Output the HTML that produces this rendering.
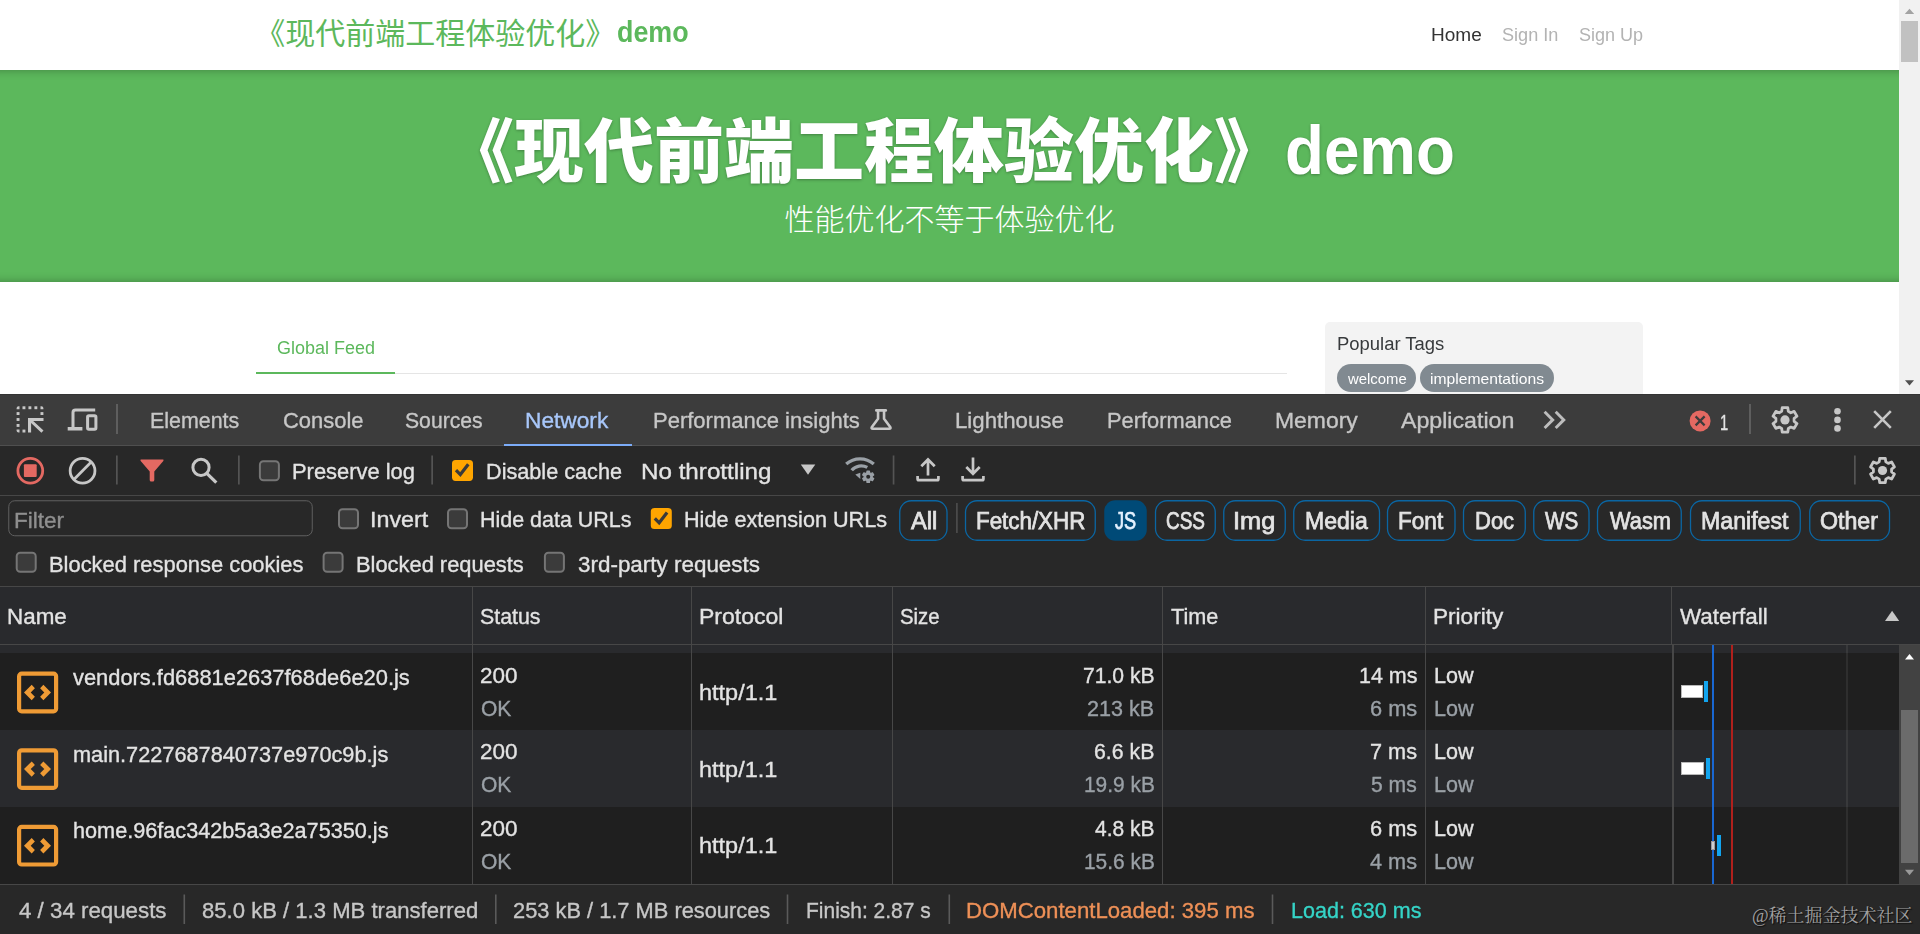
<!DOCTYPE html>
<html lang="zh-CN">
<head>
<meta charset="utf-8">
<title>《现代前端工程体验优化》demo</title>
<style>
*{box-sizing:border-box;margin:0;padding:0}
html,body{width:1920px;height:934px;overflow:hidden;background:#fff}
body{position:relative;font-family:"Liberation Sans","Noto Sans CJK SC",sans-serif}
.a{position:absolute}
.t{position:absolute;white-space:nowrap;transform-origin:0 0;font-family:"Liberation Sans","Noto Sans CJK SC",sans-serif}
.cjk{position:absolute;white-space:nowrap;font-family:"Liberation Sans","Noto Sans CJK SC",sans-serif}
#txt{position:absolute;left:0;top:0;width:1920px;height:934px;will-change:transform}
/* page */
#page{left:0;top:0;width:1899px;height:394px;background:#fff;overflow:hidden}
#banner{left:0;top:70px;width:1899px;height:212px;background:#5cb85c;box-shadow:inset 0 10px 10px -10px rgba(0,0,0,.3),inset 0 -10px 10px -10px rgba(0,0,0,.3)}
#pscroll{left:1899px;top:0;width:21px;height:394px;background:#f1f1f1}
#pthumb{left:1901px;top:21px;width:17px;height:41px;background:#c1c1c1}
#side{left:1325px;top:322px;width:318px;height:90px;background:#f3f3f3;border-radius:5px}
.tag{top:364.2px;height:27.8px;border-radius:14px;background:#818a91}
/* devtools */
#dt{left:0;top:394px;width:1920px;height:540px;background:#282828;overflow:hidden}
.hl{position:absolute;left:0;width:1920px;height:1px}
.vl{position:absolute;width:1px}
</style>
</head>
<body>
<!-- ================= PAGE ================= -->
<div id="page" class="a">
  <div id="banner" class="a"></div>
  <!-- nav brand -->
  <span class="cjk" id="brand" style="left:255.3px;top:12px;font-size:30px;line-height:44px;color:#5cb85c">《现代前端工程体验优化》</span>
  <!-- banner title -->
  <span class="cjk" id="h1" style="left:444px;top:103px;font-size:70px;line-height:100px;font-weight:900;color:#fff;text-shadow:0 1px 3px rgba(0,0,0,.3)">《现代前端工程体验优化》</span>
  <span class="cjk" id="sub" style="left:784.5px;top:197.7px;font-size:30px;line-height:44px;font-weight:300;color:#fff">性能优化不等于体验优化</span>
  <!-- feed toggle -->
  <div class="a" style="left:256px;top:372.5px;width:1031px;height:1.3px;background:#e5e5e5"></div>
  <div class="a" style="left:256px;top:371.6px;width:139px;height:2.3px;background:#5cb85c"></div>
  <!-- sidebar -->
  <div id="side" class="a"></div>
  <div class="a tag" style="left:1336.7px;width:79.5px"></div>
  <div class="a tag" style="left:1420px;width:134px"></div>
</div>
<div id="pscroll" class="a"></div>
<div id="pthumb" class="a"></div>
<svg class="a" style="left:1899px;top:0" width="21" height="394" viewBox="0 0 21 394">
  <path d="M5.8 14 L10.5 8.8 L15.2 14 Z" fill="#a3a3a3"/>
  <path d="M6 380.3 L15 380.3 L10.5 385.5 Z" fill="#505050"/>
</svg>

<!-- ================= DEVTOOLS ================= -->
<div id="dt" class="a">
  <!-- tab bar -->
  <div class="a" style="left:0;top:0;width:1920px;height:52px;background:#3c3c3c"></div>
  <div class="hl" style="top:0;background:#343434"></div>
  <div class="hl" style="top:51px;background:#4f4f4f"></div>
  <div class="a" style="left:504px;top:49.5px;width:128px;height:2.5px;background:#7cacf8"></div>
  <!-- toolbar bottom border -->
  <div class="hl" style="top:101px;background:#474747"></div>
  <!-- grid header -->
  <div class="a" style="left:0;top:192px;width:1920px;height:67px;background:#292a2d"></div>
  <div class="hl" style="top:192px;background:#474747"></div>
  <div class="hl" style="top:250px;background:#474747"></div>
  <!-- rows -->
  <div class="a" style="left:0;top:259px;width:1899px;height:77px;background:#1f1f1f"></div>
  <div class="a" style="left:0;top:336px;width:1899px;height:77px;background:#292a2d"></div>
  <div class="a" style="left:0;top:413px;width:1899px;height:77px;background:#1f1f1f"></div>
  <!-- column dividers -->
  <div class="vl" style="left:472px;top:192px;height:298px;background:#474747"></div>
  <div class="vl" style="left:691px;top:192px;height:298px;background:#474747"></div>
  <div class="vl" style="left:892px;top:192px;height:298px;background:#474747"></div>
  <div class="vl" style="left:1162px;top:192px;height:298px;background:#474747"></div>
  <div class="vl" style="left:1425px;top:192px;height:298px;background:#474747"></div>
  <div class="vl" style="left:1671px;top:192px;height:59px;background:#474747"></div>
  <div class="a" style="left:1672px;top:251px;width:2px;height:239px;background:#474747"></div>
  <div class="a" style="left:1845.5px;top:251px;width:2px;height:239px;background:rgba(255,255,255,.07)"></div>
  <!-- waterfall lines -->
  <div class="a" style="left:1712.3px;top:251px;width:2px;height:239px;background:#1967d2"></div>
  <div class="a" style="left:1731px;top:251px;width:2px;height:239px;background:#b0201c"></div>
  <!-- waterfall bars -->
  <div class="a" style="left:1681.3px;top:291.3px;width:21.3px;height:13.2px;background:#fff;border:1px solid #b8b8b8"></div>
  <div class="a" style="left:1704.3px;top:287px;width:4px;height:21px;background:#12a4ee"></div>
  <div class="a" style="left:1681.3px;top:368px;width:23px;height:13.2px;background:#fff;border:1px solid #b8b8b8"></div>
  <div class="a" style="left:1705.8px;top:364.2px;width:4.2px;height:21px;background:#12a4ee"></div>
  <div class="a" style="left:1711.3px;top:447px;width:4.2px;height:9.2px;background:#d0d0d0;border:1px solid #9a9aa0"></div>
  <div class="a" style="left:1717px;top:441.2px;width:4.2px;height:20.6px;background:#12a4ee"></div>
  <!-- grid scrollbar -->
  <div class="a" style="left:1899px;top:251px;width:21px;height:239px;background:#424242"></div>
  <div class="a" style="left:1901.3px;top:316.3px;width:16.7px;height:152.5px;background:#6b6b6b"></div>
  <svg class="a" style="left:1899px;top:251px" width="21" height="239" viewBox="0 0 21 239">
    <path d="M6 14.5 L10.5 9 L15 14.5 Z" fill="#fff"/>
    <path d="M6 224.7 L15 224.7 L10.5 230.3 Z" fill="#9a9a9a"/>
  </svg>
  <!-- status bar -->
  <div class="a" style="left:0;top:490px;width:1920px;height:50px;background:#282828"></div>
  <div class="hl" style="top:490px;background:#474747"></div>
<!--DT-->
</div>
<span class="a" id="wm" style="left:1752px;top:903px;font-family:'Liberation Serif','Noto Serif CJK SC',serif;font-size:18px;line-height:26px;color:#a0a0a0;white-space:nowrap;text-shadow:1px 1px 1px rgba(0,0,0,.8)">@稀土掘金技术社区</span>
<svg class="a" style="left:0;top:0;pointer-events:none" width="1920" height="934" viewBox="0 0 1920 934"><rect x="22.5" y="406.3" width="2.9" height="2.9" fill="#c7c7c7"/>
<rect x="28.45" y="406.3" width="2.9" height="2.9" fill="#c7c7c7"/>
<rect x="34.4" y="406.3" width="2.9" height="2.9" fill="#c7c7c7"/>
<rect x="16.6" y="412.1" width="2.9" height="2.9" fill="#c7c7c7"/>
<rect x="16.6" y="418.05" width="2.9" height="2.9" fill="#c7c7c7"/>
<rect x="16.6" y="424" width="2.9" height="2.9" fill="#c7c7c7"/>
<rect x="22.5" y="429.6" width="2.9" height="2.9" fill="#c7c7c7"/>
<rect x="40.5" y="412.1" width="2.9" height="2.9" fill="#c7c7c7"/>
<path d="M16.6 409.2 V408.3 Q16.6 406.3 18.6 406.3 H19.5 V409.2Z" fill="#c7c7c7"/>
<path d="M43.4 409.2 V408.3 Q43.4 406.3 41.4 406.3 H40.5 V409.2Z" fill="#c7c7c7"/>
<path d="M16.6 429.6 V430.5 Q16.6 432.5 18.6 432.5 H19.5 V429.6Z" fill="#c7c7c7"/>
<path d="M28 418 H43.5 V420.9 H33.2 L43.5 430.6 L41.4 432.7 L31.1 423 V432.6 H28Z" fill="#c7c7c7"/>
<path d="M73 427.4 V412.5 Q73 410 75.5 410 H95.2" fill="none" stroke="#c7c7c7" stroke-width="3"/>
<rect x="67.7" y="427" width="14.7" height="3.5" fill="#c7c7c7"/>
<rect x="87.6" y="415.75" width="8.3" height="13.55" rx="1.3" fill="none" stroke="#c7c7c7" stroke-width="3"/>
<rect x="116" y="404" width="2" height="30" fill="#5e5e5e"/>
<rect x="1749" y="404" width="2" height="30" fill="#5e5e5e"/>
<path d="M876.3 410.4 H885.8" stroke="#c7c7c7" stroke-width="2.6" stroke-linecap="round" fill="none"/>
<path d="M878.05 410.4 V418.8 L871.9 427 Q870.9 428.7 872.9 428.7 H889.2 Q891.2 428.7 890.2 427 L884.05 418.8 V410.4" stroke="#c7c7c7" stroke-width="2.6" stroke-linejoin="round" fill="none"/>
<path d="M1544.6 411.8 L1552.7 419.9 L1544.6 428" stroke="#bdbdbd" stroke-width="2.9" fill="none"/>
<path d="M1555.6999999999998 411.8 L1563.8 419.9 L1555.6999999999998 428" stroke="#bdbdbd" stroke-width="2.9" fill="none"/>
<circle cx="1700.1" cy="420.9" r="10.5" fill="#e46962"/>
<path d="M1695.6 416.4 L1704.6 425.4 M1704.6 416.4 L1695.6 425.4" stroke="#3c3c3c" stroke-width="2.2" fill="none"/>
<path d="M1788.30 411.31 L1787.81 407.72 L1782.19 407.72 L1781.70 411.31 L1779.21 412.75 L1775.86 411.38 L1773.05 416.25 L1775.91 418.46 L1775.91 421.34 L1773.05 423.55 L1775.86 428.42 L1779.21 427.05 L1781.70 428.49 L1782.19 432.08 L1787.81 432.08 L1788.30 428.49 L1790.79 427.05 L1794.14 428.42 L1796.95 423.55 L1794.09 421.34 L1794.09 418.46 L1796.95 416.25 L1794.14 411.38 L1790.79 412.75Z" fill="none" stroke="#c7c7c7" stroke-width="2.8" stroke-linejoin="round"/><circle cx="1785" cy="419.9" r="4.6" fill="#c7c7c7"/>
<path d="M1885.80 461.91 L1885.31 458.32 L1879.69 458.32 L1879.20 461.91 L1876.71 463.35 L1873.36 461.98 L1870.55 466.85 L1873.41 469.06 L1873.41 471.94 L1870.55 474.15 L1873.36 479.02 L1876.71 477.65 L1879.20 479.09 L1879.69 482.68 L1885.31 482.68 L1885.80 479.09 L1888.29 477.65 L1891.64 479.02 L1894.45 474.15 L1891.59 471.94 L1891.59 469.06 L1894.45 466.85 L1891.64 461.98 L1888.29 463.35Z" fill="none" stroke="#c7c7c7" stroke-width="2.8" stroke-linejoin="round"/><circle cx="1882.5" cy="470.5" r="4.6" fill="#c7c7c7"/>
<circle cx="1837.5" cy="411.3" r="3.3" fill="#c7c7c7"/>
<circle cx="1837.5" cy="419.9" r="3.3" fill="#c7c7c7"/>
<circle cx="1837.5" cy="428.4" r="3.3" fill="#c7c7c7"/>
<path d="M1874.2 411.2 L1890.8 427.9 M1890.8 411.2 L1874.2 427.9" stroke="#c7c7c7" stroke-width="2.6" fill="none"/>
<circle cx="30.3" cy="470.7" r="12.4" fill="none" stroke="#e46962" stroke-width="2.8"/>
<rect x="23.9" y="464.3" width="12.8" height="12.8" rx="1" fill="#e46962"/>
<circle cx="82.55" cy="470.7" r="12.4" fill="none" stroke="#c7c7c7" stroke-width="2.8"/>
<path d="M73.9 479.4 L91.2 462" stroke="#c7c7c7" stroke-width="2.8" fill="none"/>
<rect x="116" y="455.5" width="1.7" height="29" fill="#545454"/>
<rect x="238" y="455.5" width="1.7" height="29" fill="#545454"/>
<rect x="431.3" y="455.5" width="1.7" height="29" fill="#545454"/>
<rect x="892.7" y="455.5" width="1.7" height="29" fill="#545454"/>
<rect x="1854" y="455.5" width="1.7" height="29" fill="#545454"/>
<path d="M141.3 459.6 H162.7 Q164.3 459.6 163.3 460.9 L154.3 471.6 V480 Q154.3 481.5 152.8 481.5 H151.2 Q149.7 481.5 149.7 480 V471.6 L140.7 460.9 Q139.7 459.6 141.3 459.6Z" fill="#e46962"/>
<circle cx="201" cy="467.4" r="8.1" fill="none" stroke="#c7c7c7" stroke-width="3"/>
<path d="M206.8 473.3 L216.3 482.6" stroke="#c7c7c7" stroke-width="3.2" fill="none"/>
<rect x="259.9" y="461.2" width="19" height="19" rx="3.5" fill="#3b3b3b" stroke="#757575" stroke-width="2"/>
<rect x="339" y="509.3" width="19" height="19" rx="3.5" fill="#3b3b3b" stroke="#757575" stroke-width="2"/>
<rect x="448" y="509.3" width="19" height="19" rx="3.5" fill="#3b3b3b" stroke="#757575" stroke-width="2"/>
<rect x="16.7" y="552.8" width="19" height="19" rx="3.5" fill="#3b3b3b" stroke="#757575" stroke-width="2"/>
<rect x="323.6" y="552.8" width="19" height="19" rx="3.5" fill="#3b3b3b" stroke="#757575" stroke-width="2"/>
<rect x="544.9" y="552.8" width="19" height="19" rx="3.5" fill="#3b3b3b" stroke="#757575" stroke-width="2"/>
<rect x="452" y="459.9" width="21" height="21" rx="3.6" fill="#ffa500"/><path d="M456.0 470.09999999999997 L460.35 474.59999999999997 L468.3 464.29999999999995" fill="none" stroke="#3a3a3a" stroke-width="3.2"/>
<rect x="650.8" y="508.1" width="21" height="21" rx="3.6" fill="#ffa500"/><path d="M654.8 518.3000000000001 L659.15 522.8000000000001 L667.0999999999999 512.5" fill="none" stroke="#3a3a3a" stroke-width="3.2"/>
<path d="M800.8 464.4 H815.3 L808 474.8Z" fill="#c7c7c7"/>
<path d="M846.2 464.1 A21 21 0 0 1 873.8 464.1" stroke="#9aa0a6" stroke-width="3.3" fill="none"/>
<path d="M851.7 470.2 A12.5 12.5 0 0 1 867.3 467.4" stroke="#9aa0a6" stroke-width="3.3" fill="none"/>
<path d="M855.3 474.5 L860.3 472.7 L860.3 479Z" fill="#9aa0a6"/>
<circle cx="868.2" cy="476.7" r="7.4" fill="#282828"/>
<path d="M869.60 472.85 L869.41 471.03 L866.99 471.03 L866.80 472.85 L865.56 473.56 L863.89 472.82 L862.68 474.91 L864.16 475.99 L864.16 477.41 L862.68 478.49 L863.89 480.58 L865.56 479.84 L866.80 480.55 L866.99 482.37 L869.41 482.37 L869.60 480.55 L870.84 479.84 L872.51 480.58 L873.72 478.49 L872.24 477.41 L872.24 475.99 L873.72 474.91 L872.51 472.82 L870.84 473.56Z" fill="#9aa0a6" stroke="#9aa0a6" stroke-width="1.2" stroke-linejoin="round"/><circle cx="868.2" cy="476.7" r="0" fill="#9aa0a6"/>
<circle cx="868.2" cy="476.7" r="2" fill="#282828"/>
<path d="M917.6 475.9 V478.9 Q917.6 480.1 918.8 480.1 H937.2 Q938.4 480.1 938.4 478.9 V475.9" stroke="#c7c7c7" stroke-width="2.7" fill="none"/>
<path d="M928 475.5 V459.6 M921.3 466.3 L928 459.5 L934.7 466.3" stroke="#c7c7c7" stroke-width="2.7" fill="none"/>
<path d="M962.6 475.9 V478.9 Q962.6 480.1 963.8 480.1 H982.2 Q983.4 480.1 983.4 478.9 V475.9" stroke="#c7c7c7" stroke-width="2.7" fill="none"/>
<path d="M973 457.4 V473.6 M966.3 467 L973 473.8 L979.7 467" stroke="#c7c7c7" stroke-width="2.7" fill="none"/>
<rect x="8.75" y="500.75" width="303.5" height="35" rx="6" fill="none" stroke="#5f5f5f" stroke-width="1"/>
<rect x="899.75" y="500.75" width="47.25" height="39.5" rx="11.5" fill="none" stroke="#0a66a3" stroke-width="1.3"/>
<rect x="965.5" y="500.75" width="129.75" height="39.5" rx="11.5" fill="none" stroke="#0a66a3" stroke-width="1.3"/>
<rect x="1104.25" y="500.25" width="42.5" height="40.5" rx="11" fill="#004a77"/>
<rect x="1155.5" y="500.75" width="59.75" height="39.5" rx="11.5" fill="none" stroke="#0a66a3" stroke-width="1.3"/>
<rect x="1223.75" y="500.75" width="61.5" height="39.5" rx="11.5" fill="none" stroke="#0a66a3" stroke-width="1.3"/>
<rect x="1293.75" y="500.75" width="85.75" height="39.5" rx="11.5" fill="none" stroke="#0a66a3" stroke-width="1.3"/>
<rect x="1387.5" y="500.75" width="67.5" height="39.5" rx="11.5" fill="none" stroke="#0a66a3" stroke-width="1.3"/>
<rect x="1463.5" y="500.75" width="61.75" height="39.5" rx="11.5" fill="none" stroke="#0a66a3" stroke-width="1.3"/>
<rect x="1533.75" y="500.75" width="55.25" height="39.5" rx="11.5" fill="none" stroke="#0a66a3" stroke-width="1.3"/>
<rect x="1597.5" y="500.75" width="83.75" height="39.5" rx="11.5" fill="none" stroke="#0a66a3" stroke-width="1.3"/>
<rect x="1690.5" y="500.75" width="109.75" height="39.5" rx="11.5" fill="none" stroke="#0a66a3" stroke-width="1.3"/>
<rect x="1809.75" y="500.75" width="79.75" height="39.5" rx="11.5" fill="none" stroke="#0a66a3" stroke-width="1.3"/>
<rect x="956" y="503" width="1.8" height="30" fill="#4a4a4a"/>
<path d="M1885 621 L1892.1 610.8 L1899.2 621Z" fill="#c7c7c7"/>
<rect x="19.1" y="673.7" width="37" height="37.6" rx="2.6" fill="none" stroke="#ef9b35" stroke-width="4.2"/><path d="M24 692.5 L31.7 684.8 L34.9 688.3 L30.7 692.5 L34.9 696.7 L31.7 700.2Z" fill="#ef9b35"/><path d="M51 692.5 L43.4 684.8 L40.1 688.3 L44.3 692.5 L40.1 696.7 L43.4 700.2Z" fill="#ef9b35"/>
<rect x="19.1" y="750.3000000000001" width="37" height="37.6" rx="2.6" fill="none" stroke="#ef9b35" stroke-width="4.2"/><path d="M24 769.1 L31.7 761.4 L34.9 764.9 L30.7 769.1 L34.9 773.3000000000001 L31.7 776.8000000000001Z" fill="#ef9b35"/><path d="M51 769.1 L43.4 761.4 L40.1 764.9 L44.3 769.1 L40.1 773.3000000000001 L43.4 776.8000000000001Z" fill="#ef9b35"/>
<rect x="19.1" y="826.9" width="37" height="37.6" rx="2.6" fill="none" stroke="#ef9b35" stroke-width="4.2"/><path d="M24 845.6999999999999 L31.7 837.9999999999999 L34.9 841.4999999999999 L30.7 845.6999999999999 L34.9 849.9 L31.7 853.4Z" fill="#ef9b35"/><path d="M51 845.6999999999999 L43.4 837.9999999999999 L40.1 841.4999999999999 L44.3 845.6999999999999 L40.1 849.9 L43.4 853.4Z" fill="#ef9b35"/>
<rect x="183.5" y="894.5" width="1.6" height="29.5" fill="#5a5a5a"/>
<rect x="495" y="894.5" width="1.6" height="29.5" fill="#5a5a5a"/>
<rect x="786.7" y="894.5" width="1.6" height="29.5" fill="#5a5a5a"/>
<rect x="948.5" y="894.5" width="1.6" height="29.5" fill="#5a5a5a"/>
<rect x="1271.7" y="894.5" width="1.6" height="29.5" fill="#5a5a5a"/></svg>
<div id="txt">
<span class="t" style="left:1430.99px;top:22.99px;font-size:18.8px;line-height:23px;color:#333333;transform:scaleX(1.0133);">Home</span>
<span class="t" style="left:1502.40px;top:22.99px;font-size:18.8px;line-height:23px;color:#b3b3b3;transform:scaleX(0.9651);">Sign In</span>
<span class="t" style="left:1579.30px;top:22.99px;font-size:18.8px;line-height:23px;color:#b3b3b3;transform:scaleX(0.9598);">Sign Up</span>
<span class="t" style="left:616.57px;top:15.05px;font-size:29px;line-height:35px;color:#5cb85c;font-weight:700;transform:scaleX(0.9256);">demo</span>
<span class="t" style="left:1284.94px;top:109.26px;font-size:68.5px;line-height:83px;color:#ffffff;font-weight:700;transform:scaleX(0.9293);text-shadow:0 1px 3px rgba(0,0,0,.3);">demo</span>
<span class="t" style="left:276.75px;top:336.24px;font-size:18.8px;line-height:23px;color:#5cb85c;transform:scaleX(0.9571);">Global Feed</span>
<span class="t" style="left:1337.12px;top:332.19px;font-size:18.8px;line-height:23px;color:#373a3c;transform:scaleX(0.9821);">Popular Tags</span>
<span class="t" style="left:1348.01px;top:369.77px;font-size:14.8px;line-height:18px;color:#ffffff;transform:scaleX(1.0058);">welcome</span>
<span class="t" style="left:1430.20px;top:369.77px;font-size:14.8px;line-height:18px;color:#ffffff;transform:scaleX(1.0592);">implementations</span>
<span class="t" style="left:150.28px;top:406.88px;font-size:22px;line-height:27px;color:#c7c7c7;transform:scaleX(0.9729);-webkit-text-stroke:0.35px;">Elements</span>
<span class="t" style="left:282.75px;top:406.88px;font-size:22px;line-height:27px;color:#c7c7c7;transform:scaleX(0.9971);-webkit-text-stroke:0.35px;">Console</span>
<span class="t" style="left:404.79px;top:406.88px;font-size:22px;line-height:27px;color:#c7c7c7;transform:scaleX(0.9617);-webkit-text-stroke:0.35px;">Sources</span>
<span class="t" style="left:653.25px;top:406.88px;font-size:22px;line-height:27px;color:#c7c7c7;transform:scaleX(1.0005);-webkit-text-stroke:0.35px;">Performance insights</span>
<span class="t" style="left:955.24px;top:406.88px;font-size:22px;line-height:27px;color:#c7c7c7;transform:scaleX(1.0102);-webkit-text-stroke:0.35px;">Lighthouse</span>
<span class="t" style="left:1106.51px;top:406.88px;font-size:22px;line-height:27px;color:#c7c7c7;transform:scaleX(0.9923);-webkit-text-stroke:0.35px;">Performance</span>
<span class="t" style="left:1275.21px;top:406.88px;font-size:22px;line-height:27px;color:#c7c7c7;transform:scaleX(1.0421);-webkit-text-stroke:0.35px;">Memory</span>
<span class="t" style="left:1401.25px;top:406.88px;font-size:22px;line-height:27px;color:#c7c7c7;transform:scaleX(1.0527);-webkit-text-stroke:0.35px;">Application</span>
<span class="t" style="left:525.22px;top:406.88px;font-size:22px;line-height:27px;color:#a8c7fa;transform:scaleX(1.0318);-webkit-text-stroke:0.35px;">Network</span>
<span class="t" style="left:1719.93px;top:408.88px;font-size:22px;line-height:27px;color:#e3e3e3;transform:scaleX(0.6727);-webkit-text-stroke:0.35px;">1</span>
<span class="t" style="left:292.00px;top:457.88px;font-size:22px;line-height:27px;color:#e3e3e3;transform:scaleX(0.9957);-webkit-text-stroke:0.35px;">Preserve log</span>
<span class="t" style="left:485.52px;top:457.88px;font-size:22px;line-height:27px;color:#e3e3e3;transform:scaleX(0.9839);-webkit-text-stroke:0.35px;">Disable cache</span>
<span class="t" style="left:640.90px;top:457.88px;font-size:22px;line-height:27px;color:#e3e3e3;transform:scaleX(1.0998);-webkit-text-stroke:0.35px;">No throttling</span>
<span class="t" style="left:13.98px;top:506.63px;font-size:22px;line-height:27px;color:#8f8f8f;transform:scaleX(1.0250);-webkit-text-stroke:0.35px;">Filter</span>
<span class="t" style="left:369.88px;top:506.08px;font-size:22px;line-height:27px;color:#e3e3e3;transform:scaleX(1.0584);-webkit-text-stroke:0.35px;">Invert</span>
<span class="t" style="left:480.27px;top:506.08px;font-size:22px;line-height:27px;color:#e3e3e3;transform:scaleX(0.9754);-webkit-text-stroke:0.35px;">Hide data URLs</span>
<span class="t" style="left:684.02px;top:506.08px;font-size:22px;line-height:27px;color:#e3e3e3;transform:scaleX(0.9822);-webkit-text-stroke:0.35px;">Hide extension URLs</span>
<span class="t" style="left:910.80px;top:506.66px;font-size:23.5px;line-height:29px;color:#e3e3e3;transform:scaleX(1.0102);-webkit-text-stroke:0.75px;">All</span>
<span class="t" style="left:976.35px;top:506.66px;font-size:23.5px;line-height:29px;color:#e3e3e3;transform:scaleX(0.9509);-webkit-text-stroke:0.75px;">Fetch/XHR</span>
<span class="t" style="left:1115.30px;top:506.66px;font-size:23.5px;line-height:29px;color:#e4f1ff;transform:scaleX(0.7720);-webkit-text-stroke:0.75px;">JS</span>
<span class="t" style="left:1165.74px;top:506.66px;font-size:23.5px;line-height:29px;color:#e3e3e3;transform:scaleX(0.8072);-webkit-text-stroke:0.75px;">CSS</span>
<span class="t" style="left:1233.15px;top:506.66px;font-size:23.5px;line-height:29px;color:#e3e3e3;transform:scaleX(1.0774);-webkit-text-stroke:0.75px;">Img</span>
<span class="t" style="left:1304.82px;top:506.66px;font-size:23.5px;line-height:29px;color:#e3e3e3;transform:scaleX(0.9799);-webkit-text-stroke:0.75px;">Media</span>
<span class="t" style="left:1398.09px;top:506.66px;font-size:23.5px;line-height:29px;color:#e3e3e3;transform:scaleX(0.9603);-webkit-text-stroke:0.75px;">Font</span>
<span class="t" style="left:1474.86px;top:506.66px;font-size:23.5px;line-height:29px;color:#e3e3e3;transform:scaleX(0.9357);-webkit-text-stroke:0.75px;">Doc</span>
<span class="t" style="left:1545.30px;top:506.66px;font-size:23.5px;line-height:29px;color:#e3e3e3;transform:scaleX(0.8782);-webkit-text-stroke:0.75px;">WS</span>
<span class="t" style="left:1609.80px;top:506.66px;font-size:23.5px;line-height:29px;color:#e3e3e3;transform:scaleX(0.9274);-webkit-text-stroke:0.75px;">Wasm</span>
<span class="t" style="left:1701.32px;top:506.66px;font-size:23.5px;line-height:29px;color:#e3e3e3;transform:scaleX(0.9843);-webkit-text-stroke:0.75px;">Manifest</span>
<span class="t" style="left:1819.81px;top:506.66px;font-size:23.5px;line-height:29px;color:#e3e3e3;transform:scaleX(0.9862);-webkit-text-stroke:0.75px;">Other</span>
<span class="t" style="left:48.50px;top:551.08px;font-size:22px;line-height:27px;color:#e3e3e3;transform:scaleX(0.9957);-webkit-text-stroke:0.35px;">Blocked response cookies</span>
<span class="t" style="left:356.01px;top:551.08px;font-size:22px;line-height:27px;color:#e3e3e3;transform:scaleX(0.9940);-webkit-text-stroke:0.35px;">Blocked requests</span>
<span class="t" style="left:577.50px;top:551.08px;font-size:22px;line-height:27px;color:#e3e3e3;transform:scaleX(1.0195);-webkit-text-stroke:0.35px;">3rd-party requests</span>
<span class="t" style="left:7.23px;top:602.88px;font-size:22px;line-height:27px;color:#e3e3e3;transform:scaleX(1.0183);-webkit-text-stroke:0.35px;">Name</span>
<span class="t" style="left:480.28px;top:602.88px;font-size:22px;line-height:27px;color:#e3e3e3;transform:scaleX(0.9695);-webkit-text-stroke:0.35px;">Status</span>
<span class="t" style="left:699.45px;top:602.88px;font-size:22px;line-height:27px;color:#e3e3e3;transform:scaleX(1.0467);-webkit-text-stroke:0.35px;">Protocol</span>
<span class="t" style="left:899.82px;top:602.88px;font-size:22px;line-height:27px;color:#e3e3e3;transform:scaleX(0.9263);-webkit-text-stroke:0.35px;">Size</span>
<span class="t" style="left:1171.25px;top:602.88px;font-size:22px;line-height:27px;color:#e3e3e3;transform:scaleX(0.9825);-webkit-text-stroke:0.35px;">Time</span>
<span class="t" style="left:1433.47px;top:602.88px;font-size:22px;line-height:27px;color:#e3e3e3;transform:scaleX(1.0267);-webkit-text-stroke:0.35px;">Priority</span>
<span class="t" style="left:1680.00px;top:602.88px;font-size:22px;line-height:27px;color:#e3e3e3;transform:scaleX(1.0195);-webkit-text-stroke:0.35px;">Waterfall</span>
<span class="t" style="left:73.25px;top:664.13px;font-size:22px;line-height:27px;color:#e3e3e3;transform:scaleX(0.9938);-webkit-text-stroke:0.35px;">vendors.fd6881e2637f68de6e20.js</span>
<span class="t" style="left:480.23px;top:661.63px;font-size:22px;line-height:27px;color:#e3e3e3;transform:scaleX(1.0220);-webkit-text-stroke:0.35px;">200</span>
<span class="t" style="left:480.54px;top:694.63px;font-size:22px;line-height:27px;color:#9aa0a6;transform:scaleX(0.9562);-webkit-text-stroke:0.35px;">OK</span>
<span class="t" style="left:699.43px;top:679.13px;font-size:22px;line-height:27px;color:#e3e3e3;transform:scaleX(1.0671);-webkit-text-stroke:0.35px;">http/1.1</span>
<span class="t" style="left:1082.79px;top:661.63px;font-size:22px;line-height:27px;color:#e3e3e3;transform:scaleX(0.9598);-webkit-text-stroke:0.35px;">71.0 kB</span>
<span class="t" style="left:1087.27px;top:694.63px;font-size:22px;line-height:27px;color:#9aa0a6;transform:scaleX(0.9803);-webkit-text-stroke:0.35px;">213 kB</span>
<span class="t" style="left:1358.52px;top:661.63px;font-size:22px;line-height:27px;color:#e3e3e3;transform:scaleX(0.9761);-webkit-text-stroke:0.35px;">14 ms</span>
<span class="t" style="left:1369.76px;top:694.63px;font-size:22px;line-height:27px;color:#9aa0a6;transform:scaleX(0.9909);-webkit-text-stroke:0.35px;">6 ms</span>
<span class="t" style="left:1433.52px;top:661.63px;font-size:22px;line-height:27px;color:#e3e3e3;transform:scaleX(0.9817);-webkit-text-stroke:0.35px;">Low</span>
<span class="t" style="left:1433.52px;top:694.63px;font-size:22px;line-height:27px;color:#9aa0a6;transform:scaleX(0.9817);-webkit-text-stroke:0.35px;">Low</span>
<span class="t" style="left:73.01px;top:740.73px;font-size:22px;line-height:27px;color:#e3e3e3;transform:scaleX(0.9874);-webkit-text-stroke:0.35px;">main.7227687840737e970c9b.js</span>
<span class="t" style="left:480.23px;top:738.23px;font-size:22px;line-height:27px;color:#e3e3e3;transform:scaleX(1.0220);-webkit-text-stroke:0.35px;">200</span>
<span class="t" style="left:480.54px;top:771.23px;font-size:22px;line-height:27px;color:#9aa0a6;transform:scaleX(0.9562);-webkit-text-stroke:0.35px;">OK</span>
<span class="t" style="left:699.43px;top:755.73px;font-size:22px;line-height:27px;color:#e3e3e3;transform:scaleX(1.0671);-webkit-text-stroke:0.35px;">http/1.1</span>
<span class="t" style="left:1094.03px;top:738.23px;font-size:22px;line-height:27px;color:#e3e3e3;transform:scaleX(0.9679);-webkit-text-stroke:0.35px;">6.6 kB</span>
<span class="t" style="left:1083.55px;top:771.23px;font-size:22px;line-height:27px;color:#9aa0a6;transform:scaleX(0.9495);-webkit-text-stroke:0.35px;">19.9 kB</span>
<span class="t" style="left:1370.01px;top:738.23px;font-size:22px;line-height:27px;color:#e3e3e3;transform:scaleX(0.9856);-webkit-text-stroke:0.35px;">7 ms</span>
<span class="t" style="left:1371.25px;top:771.23px;font-size:22px;line-height:27px;color:#9aa0a6;transform:scaleX(0.9596);-webkit-text-stroke:0.35px;">5 ms</span>
<span class="t" style="left:1433.52px;top:738.23px;font-size:22px;line-height:27px;color:#e3e3e3;transform:scaleX(0.9817);-webkit-text-stroke:0.35px;">Low</span>
<span class="t" style="left:1433.52px;top:771.23px;font-size:22px;line-height:27px;color:#9aa0a6;transform:scaleX(0.9817);-webkit-text-stroke:0.35px;">Low</span>
<span class="t" style="left:73.27px;top:817.33px;font-size:22px;line-height:27px;color:#e3e3e3;transform:scaleX(0.9844);-webkit-text-stroke:0.35px;">home.96fac342b5a3e2a75350.js</span>
<span class="t" style="left:480.23px;top:814.83px;font-size:22px;line-height:27px;color:#e3e3e3;transform:scaleX(1.0220);-webkit-text-stroke:0.35px;">200</span>
<span class="t" style="left:480.54px;top:847.83px;font-size:22px;line-height:27px;color:#9aa0a6;transform:scaleX(0.9562);-webkit-text-stroke:0.35px;">OK</span>
<span class="t" style="left:699.43px;top:832.33px;font-size:22px;line-height:27px;color:#e3e3e3;transform:scaleX(1.0671);-webkit-text-stroke:0.35px;">http/1.1</span>
<span class="t" style="left:1095.00px;top:814.83px;font-size:22px;line-height:27px;color:#e3e3e3;transform:scaleX(0.9523);-webkit-text-stroke:0.35px;">4.8 kB</span>
<span class="t" style="left:1083.55px;top:847.83px;font-size:22px;line-height:27px;color:#9aa0a6;transform:scaleX(0.9495);-webkit-text-stroke:0.35px;">15.6 kB</span>
<span class="t" style="left:1369.76px;top:814.83px;font-size:22px;line-height:27px;color:#e3e3e3;transform:scaleX(0.9909);-webkit-text-stroke:0.35px;">6 ms</span>
<span class="t" style="left:1370.00px;top:847.83px;font-size:22px;line-height:27px;color:#9aa0a6;transform:scaleX(0.9859);-webkit-text-stroke:0.35px;">4 ms</span>
<span class="t" style="left:1433.52px;top:814.83px;font-size:22px;line-height:27px;color:#e3e3e3;transform:scaleX(0.9817);-webkit-text-stroke:0.35px;">Low</span>
<span class="t" style="left:1433.52px;top:847.83px;font-size:22px;line-height:27px;color:#9aa0a6;transform:scaleX(0.9817);-webkit-text-stroke:0.35px;">Low</span>
<span class="t" style="left:18.75px;top:896.63px;font-size:22px;line-height:27px;color:#c7c7c7;transform:scaleX(1.0135);-webkit-text-stroke:0.35px;">4 / 34 requests</span>
<span class="t" style="left:202.00px;top:896.63px;font-size:22px;line-height:27px;color:#c7c7c7;transform:scaleX(1.0040);-webkit-text-stroke:0.35px;">85.0 kB / 1.3 MB transferred</span>
<span class="t" style="left:512.76px;top:896.63px;font-size:22px;line-height:27px;color:#c7c7c7;transform:scaleX(0.9923);-webkit-text-stroke:0.35px;">253 kB / 1.7 MB resources</span>
<span class="t" style="left:806.05px;top:896.63px;font-size:22px;line-height:27px;color:#c7c7c7;transform:scaleX(0.9531);-webkit-text-stroke:0.35px;">Finish: 2.87 s</span>
<span class="t" style="left:966.49px;top:896.63px;font-size:22px;line-height:27px;color:#ee9057;transform:scaleX(1.0082);-webkit-text-stroke:0.35px;">DOMContentLoaded: 395 ms</span>
<span class="t" style="left:1290.77px;top:896.63px;font-size:22px;line-height:27px;color:#35d4c7;transform:scaleX(0.9788);-webkit-text-stroke:0.35px;">Load: 630 ms</span>
</div>
</body>
</html>
